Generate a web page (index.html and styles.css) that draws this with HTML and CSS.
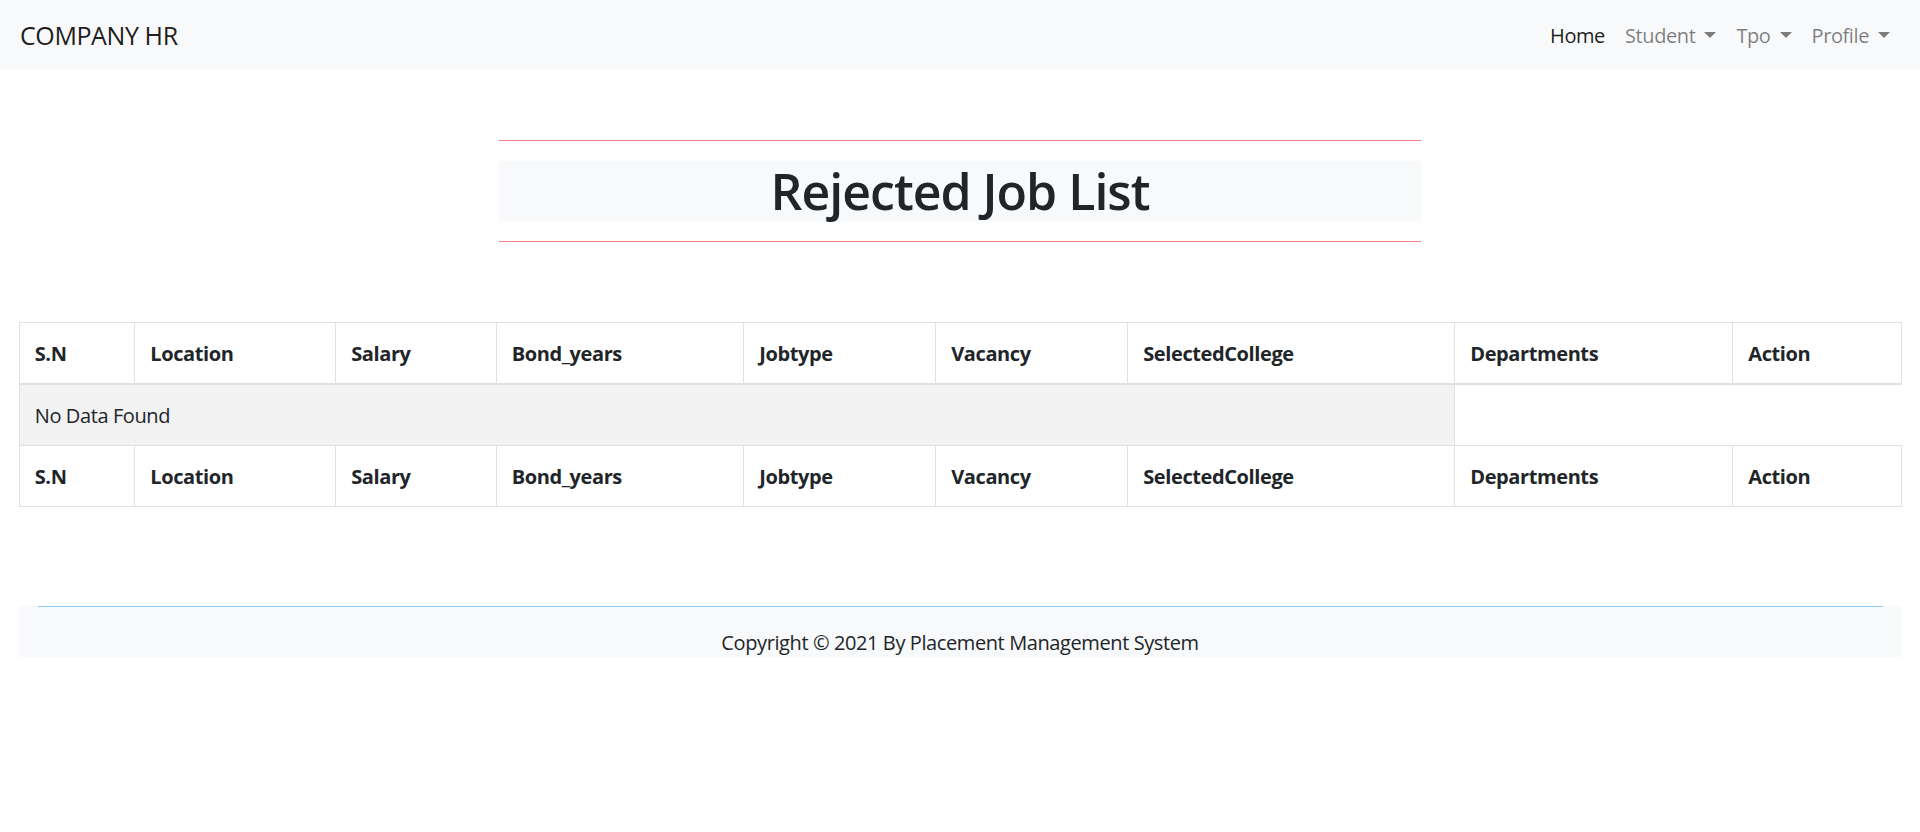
FILE: index.html
```html
<!DOCTYPE html>
<html lang="en">
<head>
<meta charset="utf-8">
<title>Rejected Job List</title>
<link rel="stylesheet" href="styles.css">
</head>
<body>
<nav class="navbar">
  <a class="brand" href="#">COMPANY HR</a>
  <ul class="nav-links">
    <li><a class="nav-link active" href="#">Home</a></li>
    <li><a class="nav-link" href="#">Student<span class="caret"></span></a></li>
    <li><a class="nav-link" href="#">Tpo<span class="caret"></span></a></li>
    <li><a class="nav-link" href="#">Profile<span class="caret"></span></a></li>
  </ul>
</nav>

<main class="container">
  <section class="title-block">
    <hr class="red-rule">
    <h1 class="page-title">Rejected Job List</h1>
    <hr class="red-rule">
  </section>

  <table class="job-table">
    <colgroup>
      <col class="c-sn">
      <col class="c-loc">
      <col class="c-sal">
      <col class="c-bond">
      <col class="c-type">
      <col class="c-vac">
      <col class="c-col">
      <col class="c-dep">
      <col class="c-act">
    </colgroup>
    <thead>
      <tr>
        <th>S.N</th><th>Location</th><th>Salary</th><th>Bond_years</th><th>Jobtype</th><th>Vacancy</th><th>SelectedCollege</th><th>Departments</th><th>Action</th>
      </tr>
    </thead>
    <tbody>
      <tr>
        <td class="empty" colspan="7">No Data Found</td>
      </tr>
    </tbody>
    <tfoot>
      <tr>
        <th>S.N</th><th>Location</th><th>Salary</th><th>Bond_years</th><th>Jobtype</th><th>Vacancy</th><th>SelectedCollege</th><th>Departments</th><th>Action</th>
      </tr>
    </tfoot>
  </table>

  <footer class="footer">
    <hr class="blue-rule">
    <p class="copy">Copyright © 2021 By Placement Management System</p>
  </footer>
</main>
</body>
</html>
```

FILE: styles.css
```css
* { box-sizing: border-box; }

html, body {
  margin: 0;
  padding: 0;
  background: #fff;
}

body {
  font-family: "Open Sans", "Noto Sans", "DejaVu Sans", sans-serif;
  font-size: 20px;
  line-height: 1.5;
  letter-spacing: -0.4px;
  color: #212529;
}

/* navbar */
.navbar {
  display: flex;
  align-items: center;
  justify-content: space-between;
  height: 70px;
  padding: 10px 20px;
  background: #f8f9fa;
}

.brand {
  font-size: 25px;
  line-height: 37.5px;
  padding-top: 2px;
  color: rgba(0, 0, 0, 0.9);
  text-decoration: none;
}

.nav-links {
  display: flex;
  list-style: none;
  margin: 0;
  padding: 0;
}

.nav-link {
  display: block;
  padding: 11px 10px 9px;
  color: rgba(0, 0, 0, 0.5);
  text-decoration: none;
}

.nav-link.active {
  color: rgba(0, 0, 0, 0.9);
}

.caret {
  display: inline-block;
  margin-left: 9px;
  vertical-align: 5px;
  border-top: 6px solid;
  border-right: 6px solid transparent;
  border-left: 6px solid transparent;
  border-bottom: 0;
}

/* main */
.container {
  padding: 0 18.75px;
}

.title-block {
  width: 922px;
  margin: 0 auto;
  padding: 50px 0 60px;
}

.red-rule {
  margin: 20px 0;
  border: 0;
  border-top: 1px solid #f08080;
}

.page-title {
  margin: 0;
  font-size: 50px;
  line-height: 60px;
  font-weight: 600;
  letter-spacing: -1px;
  text-align: center;
  background: #f8f9fa;
}

/* table */
.job-table {
  width: 100%;
  table-layout: fixed;
  border-collapse: collapse;
  margin: 0;
}

.c-sn { width: 115.5px; }
.c-loc { width: 201px; }
.c-sal { width: 160.5px; }
.c-bond { width: 247.5px; }
.c-type { width: 192px; }
.c-vac { width: 192px; }
.c-col { width: 327px; }
.c-dep { width: 278px; }
.c-act { width: 169px; }

.job-table th,
.job-table td {
  padding: 16px 15px 14px;
  border: 1px solid #dee2e6;
  text-align: left;
  vertical-align: top;
  line-height: 30px;
}

.job-table th {
  font-weight: 700;
}

.job-table thead th {
  border-bottom: 2px solid #dee2e6;
}

.job-table td.empty {
  background: #f2f2f2;
}

/* footer */
.footer {
  margin-top: 99px;
  padding: 0 18.75px;
  background: #f8f9fa;
}

.blue-rule {
  margin: 0 0 22px;
  border: 0;
  border-top: 1px solid #87cefa;
}

.copy {
  margin: 0;
  text-align: center;
  line-height: 28px;
}
```
